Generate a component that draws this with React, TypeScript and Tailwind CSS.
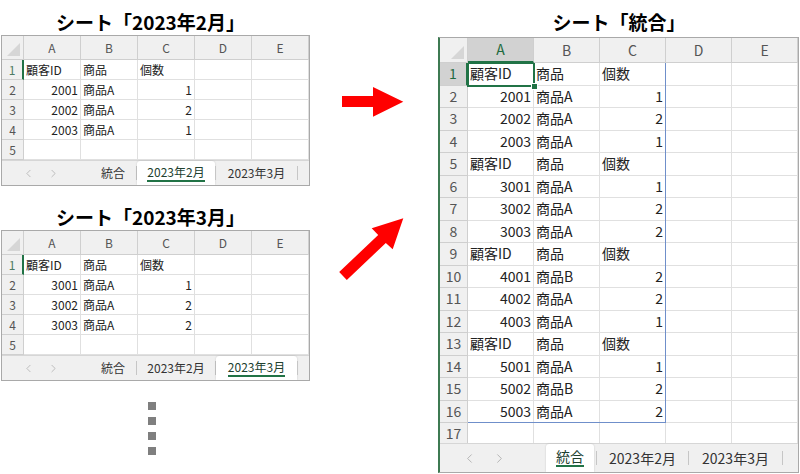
import React from "react";
import { ChevronLeft, ChevronRight } from "lucide-react";

type Row = { n: number; cells: string[] };

const H = ["顧客ID", "商品", "個数"];

const rows1: Row[] = [
  { n: 1, cells: H },
  { n: 2, cells: ["2001", "商品A", "1"] },
  { n: 3, cells: ["2002", "商品A", "2"] },
  { n: 4, cells: ["2003", "商品A", "1"] },
  { n: 5, cells: ["", "", ""] },
];

const rows2: Row[] = [
  { n: 1, cells: H },
  { n: 2, cells: ["3001", "商品A", "1"] },
  { n: 3, cells: ["3002", "商品A", "2"] },
  { n: 4, cells: ["3003", "商品A", "2"] },
  { n: 5, cells: ["", "", ""] },
];

const rows3: Row[] = [
  { n: 1, cells: H },
  { n: 2, cells: ["2001", "商品A", "1"] },
  { n: 3, cells: ["2002", "商品A", "2"] },
  { n: 4, cells: ["2003", "商品A", "1"] },
  { n: 5, cells: H },
  { n: 6, cells: ["3001", "商品A", "1"] },
  { n: 7, cells: ["3002", "商品A", "2"] },
  { n: 8, cells: ["3003", "商品A", "2"] },
  { n: 9, cells: H },
  { n: 10, cells: ["4001", "商品B", "2"] },
  { n: 11, cells: ["4002", "商品A", "2"] },
  { n: 12, cells: ["4003", "商品A", "1"] },
  { n: 13, cells: H },
  { n: 14, cells: ["5001", "商品A", "1"] },
  { n: 15, cells: ["5002", "商品B", "2"] },
  { n: 16, cells: ["5003", "商品A", "2"] },
  { n: 17, cells: ["", "", ""] },
];

const V = {
  small: {
    outer: "border border-[#a9a9a9] w-[309px] bg-white",
    grid: "grid grid-cols-[22px_57px_57px_57px_57px_57px]",
    head: "h-[24px]",
    row: "h-[20px]",
    text: "text-[12px]",
    body: "h-[100px]",
  },
  large: {
    outer: "border border-[#a9a9a9] border-l-2 border-l-[#3d7a52] w-[361px] bg-white",
    grid: "grid grid-cols-[28px_66px_66px_66px_66px_66px]",
    head: "h-[25px]",
    row: "h-[22.5px]",
    text: "text-[14px]",
    body: "h-[380px]",
  },
};

function Corner() {
  return (
    <div className="bg-[#f0f0f0] border-r border-b border-[#cfcfcf] relative">
      <svg className="absolute right-[3px] bottom-[3px]" width="13" height="13" viewBox="0 0 13 13">
        <polygon points="13,0 13,13 0,13" fill="#d6d6d6" />
      </svg>
    </div>
  );
}

function Sep() {
  return <div className="w-px h-[14px] bg-[#c6c6c6] self-center shrink-0" />;
}

function Tab({ w, label, active }: { w: string; label: string; active: boolean }) {
  if (active) {
    return (
      <div
        className={`${w} shrink-0 bg-white flex items-center justify-center rounded-t-[3px] shadow-[0_0_2px_rgba(0,0,0,0.18)]`}
      >
        <span className="border-b-2 border-[#217346] leading-[15px] pb-[1px] text-[#21402f]">{label}</span>
      </div>
    );
  }
  return <div className={`${w} shrink-0 flex items-center justify-center text-[#333]`}>{label}</div>;
}

function Sheet({ size, rows, active }: { size: "small" | "large"; rows: Row[]; active: number }) {
  const v = V[size];
  const large = size === "large";
  return (
    <div className={`${v.outer} ${v.text} font-['Noto_Sans_CJK_JP',sans-serif] text-[#222] overflow-hidden`}>
      {/* column header */}
      <div className={`${v.grid} ${v.head}`}>
        <Corner />
        {["A", "B", "C", "D", "E"].map((c, i) =>
          large && i === 0 ? (
            <div
              key={c}
              className="bg-[#d2d2d2] border-r border-[#cfcfcf] border-b-2 border-b-[#217346] flex items-center justify-center text-[#1f6a3f]"
            >
              {c}
            </div>
          ) : (
            <div
              key={c}
              className="bg-[#f0f0f0] border-r border-b border-[#cfcfcf] flex items-center justify-center text-[#555]"
            >
              {c}
            </div>
          )
        )}
      </div>
      {/* body */}
      <div className={`${v.body} relative overflow-hidden`}>
        {rows.map((r) => (
          <div key={r.n} className={`${v.grid} ${v.row}`}>
            {r.n === 1 ? (
              <div
                className={`${large ? "bg-[#d2d2d2] text-[#1f6a3f]" : "bg-[#f0f0f0] text-[#4d7a63]"} border-r-2 border-r-[#217346] border-b border-[#cfcfcf] flex items-center justify-center`}
              >
                {r.n}
              </div>
            ) : (
              <div className="bg-[#f0f0f0] border-r border-b border-[#cfcfcf] flex items-center justify-center text-[#555]">
                {r.n}
              </div>
            )}
            {[...r.cells, "", ""].map((c, i) => {
              const num = /^\d+$/.test(c);
              return (
                <div
                  key={i}
                  className={`border-r border-b border-[#e0e0e0] flex items-center whitespace-nowrap overflow-hidden ${
                    num ? "justify-end pr-[2px]" : "justify-start pl-[2px]"
                  }`}
                >
                  {c}
                </div>
              );
            })}
          </div>
        ))}
        {large && (
          <>
            <div className="absolute left-[28px] top-0 w-[198px] h-[360px] border-r border-b border-[#6f8fca]" />
            <div className="absolute left-[27px] top-[-1px] w-[68px] h-[24.5px] border-2 border-[#217346]">
              <div className="absolute right-[-5px] bottom-[-5px] w-[7px] h-[7px] bg-[#217346] border border-white" />
            </div>
          </>
        )}
      </div>
      {/* tab bar */}
      {large ? (
        <div className="h-[29px] bg-[#f0f0f0] border-t border-[#d6d6d6] flex items-stretch">
          <div className="w-[106px] shrink-0 flex items-center pl-[14px] text-[#a8a8a8]">
            <span className="w-[30px] flex justify-center">
              <ChevronLeft size={15} strokeWidth={1.3} />
            </span>
            <span className="w-[30px] flex justify-center">
              <ChevronRight size={15} strokeWidth={1.3} />
            </span>
          </div>
          <Tab w="w-[48px]" label="統合" active={active === 0} />
          <div className="w-[2px] shrink-0" />
          <Sep />
          <Tab w="w-[91px]" label="2023年2月" active={active === 1} />
          <Sep />
          <Tab w="w-[93px]" label="2023年3月" active={active === 2} />
          <Sep />
        </div>
      ) : (
        <div className="h-[25px] bg-[#f0f0f0] border-t border-[#d6d6d6] flex items-stretch">
          <div className="w-[88px] shrink-0 flex items-center pl-[14px] text-[#a8a8a8]">
            <span className="w-[25px] flex justify-center">
              <ChevronLeft size={13} strokeWidth={1.3} />
            </span>
            <span className="w-[25px] flex justify-center">
              <ChevronRight size={13} strokeWidth={1.3} />
            </span>
          </div>
          <Tab w="w-[46px]" label="統合" active={active === 0} />
          <Sep />
          <Tab w="w-[78px]" label="2023年2月" active={active === 1} />
          <Sep />
          <Tab w="w-[81px]" label="2023年3月" active={active === 2} />
          <Sep />
        </div>
      )}
    </div>
  );
}

function Title({ children, extra }: { children: React.ReactNode; extra: string }) {
  return (
    <div
      className={`${extra} h-[24px] leading-[24px] text-[19px] font-bold text-black font-['Noto_Sans_CJK_JP',sans-serif] text-center`}
    >
      {children}
    </div>
  );
}

export default function App() {
  return (
    <div className="w-[800px] h-[474px] bg-white flex overflow-hidden">
      {/* left column */}
      <div className="w-[310px] shrink-0 pl-[1px] flex flex-col">
        <Title extra="mt-[10px] mb-[1px] pr-[10px]">シート「2023年2月」</Title>
        <Sheet size="small" rows={rows1} active={1} />
        <Title extra="mt-[19px] mb-[1px] pr-[10px]">シート「2023年3月」</Title>
        <Sheet size="small" rows={rows2} active={2} />
        <div className="mt-[21px] ml-[147px] flex flex-col gap-[7px]">
          <div className="w-[8px] h-[8px] bg-[#7f7f7f]" />
          <div className="w-[8px] h-[8px] bg-[#7f7f7f]" />
          <div className="w-[8px] h-[8px] bg-[#7f7f7f]" />
          <div className="w-[8px] h-[8px] bg-[#7f7f7f]" />
        </div>
      </div>
      {/* arrows */}
      <div className="w-[128px] shrink-0">
        <svg width="128" height="474" viewBox="0 0 128 474">
          <polygon points="32,96 63,96 63,87 93.3,101.7 63,116.7 63,107 32,107" fill="#ff0000" />
          <polygon
            points="93.3,218.3 82.7,249.3 75.8,243 36.8,280 29.2,272 68.2,235 61.7,228.3"
            fill="#ff0000"
          />
        </svg>
      </div>
      {/* right column */}
      <div className="w-[362px] shrink-0 flex flex-col">
        <Title extra="mt-[10px] mb-[3px]">シート「統合」</Title>
        <Sheet size="large" rows={rows3} active={0} />
      </div>
    </div>
  );
}
